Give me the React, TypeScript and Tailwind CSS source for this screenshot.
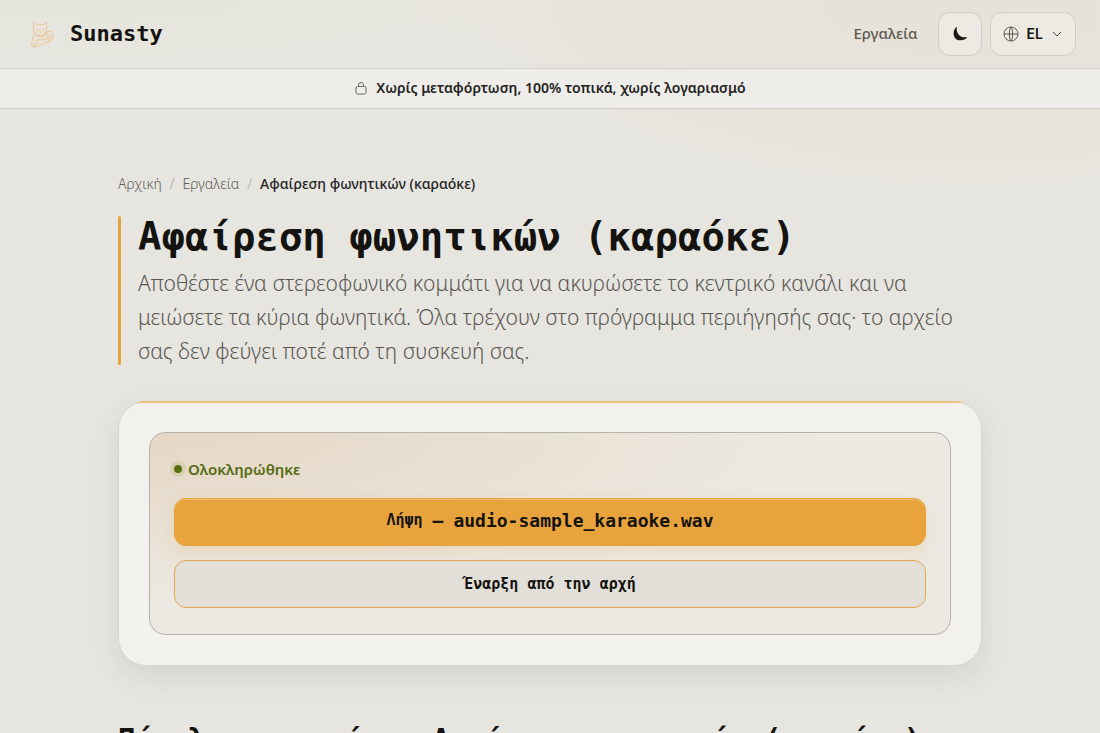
import React from "react";

const mono = "font-['DejaVu_Sans_Mono',monospace]";

function CatLogo() {
  return (
    <svg viewBox="0 0 32 32" className="size-8" fill="none" stroke="#e9c08a" strokeWidth="0.8" strokeLinecap="round" strokeLinejoin="round" aria-hidden="true">
      <path fill="#eae3d5" d="M20 16.500c1-3 5-4.500 7-2 2 3 1.500 7-1.500 9-2 1.300-4 1-5 0" />
      <path fill="#eae3d5" d="M9 14c-1-3-1-7 0-9.500l3 2.500c2-.6 4-.6 6 0l3-2.500c1 3 1 6 .5 8.500-1 3-4 4.500-6.500 4.500S10 16.500 9 14Z" />
      <path fill="#eae3d5" d="M9.500 16c-1.500 3-2.500 7-3 10 0 2.500 3 3.500 5.500 2.500l11-4.500c2-1 1-3.500-1-3.200l-7 1.200" />
      <path d="M21 15.500c2 1 2.500 3 2 5M11 22.500l4-1M8.500 27.500l4-2.500M25 16c1.500 1 1.500 3.500 0 5" />
      <path d="M12 11.500h1M17.500 11.500h1M14.500 13.500h1.500M11 17c2 2.500 7 2.500 9 0" />
    </svg>
  );
}

export default function App() {
  return (
    <div className="min-h-screen bg-[#e6e5e0] bg-[radial-gradient(ellipse_560px_220px_at_88%_0px,#e7e2d8_0%,#e7e3da_45%,#e6e5e000_100%),radial-gradient(ellipse_500px_80px_at_10%_0px,#e6e5dc_0%,#e6e5e000_100%)] font-['Noto_Sans',sans-serif] text-[#14130f]">
      <header className="flex h-[69px] items-center justify-between border-b border-[#cfcec9] px-6">
        <a href="#" className="flex items-center gap-3">
          <span className="flex size-[34px] items-center justify-center"><CatLogo /></span>
          <span className={`${mono} pb-0.5 text-[22px] font-bold`}>Sunasty</span>
        </a>
        <nav className="flex items-center gap-2">
          <a href="#" className="mr-3 pb-0.5 text-[15px] font-medium text-[#5b5952]">Εργαλεία</a>
          <button aria-label="Σκούρο θέμα" className="flex size-11 items-center justify-center rounded-xl border border-[#d0cec6] bg-[#edeae3]">
            <svg viewBox="0 0 16 16" className="size-[18px]" aria-hidden="true"><path fill="#1b1a17" d="M5.200 1.500C.8 4.500 1.200 13.600 8.500 13.600c2.500 0 4.800-.8 6-2.900C9.500 12 4 8.500 5.200 1.500Z" /></svg>
          </button>
          <button className="flex h-11 items-center gap-2 rounded-xl border border-[#d0cec6] bg-[#edeae3] px-3 font-['Inter',sans-serif] text-sm font-semibold">
            <svg viewBox="0 0 16 16" className="size-4" fill="none" stroke="#5b5952" aria-hidden="true"><circle cx="8" cy="8" r="7" /><path d="M1 8h14M8 1C5.800 3.500 5.800 12.500 8 15M8 1c2.200 2.500 2.200 11.500 0 14" /></svg>
            EL
            <svg viewBox="0 0 12 12" className="size-3" fill="none" stroke="#4c4a45" aria-hidden="true"><path d="m2 4 4 4 4-4" /></svg>
          </button>
        </nav>
      </header>
      <div className="flex h-10 items-center justify-center gap-2 border-b border-[#cfcec9] bg-[#eeede9] pb-0.5 text-sm font-semibold text-[#24231f]">
        <svg viewBox="0 0 14 14" className="size-3.5" fill="none" stroke="#6b6963" aria-hidden="true"><rect x="2" y="5.500" width="10" height="7.500" rx="1.500" /><path d="M4.500 5.500V4a2.500 2.500 0 0 1 5 0v1.500" /></svg>
        Χωρίς μεταφόρτωση, 100% τοπικά, χωρίς λογαριασμό
      </div>
      <main className="mx-auto max-w-[912px] px-6 pt-[63px]">
        <nav aria-label="Διαδρομή" className="flex gap-2 text-sm leading-6 font-[350] text-[#5f5d56]">
          <a href="#">Αρχική</a>
          <span className="text-[#aaa8a1]">/</span>
          <a href="#">Εργαλεία</a>
          <span className="text-[#aaa8a1]">/</span>
          <span className="font-medium text-[#24231f]">Αφαίρεση φωνητικών (καραόκε)</span>
        </nav>
        <div className="mt-5 flex gap-[17px]">
          <span className="mb-[3px] w-[3px] shrink-0 rounded-sm bg-[#e8a33d]" />
          <div>
            <h1 className={`${mono} text-[39px] leading-[42px] font-bold`}>Αφαίρεση φωνητικών (καραόκε)</h1>
            <p className="mt-2 text-[21px] leading-[34px] font-[350] text-[#5a5851]">
              Αποθέστε ένα στερεοφωνικό κομμάτι για να ακυρώσετε το κεντρικό κανάλι και να μειώσετε τα κύρια φωνητικά. Όλα τρέχουν στο πρόγραμμα περιήγησής σας· το αρχείο σας δεν φεύγει ποτέ από τη συσκευή σας.
            </p>
          </div>
        </div>
        <section className="relative mt-[33px] rounded-[28px] border border-[#d6d5cf] bg-[#f2f1ed] p-[30px] shadow-[0_10px_28px_rgba(60,60,40,0.10)]">
          <span className="pointer-events-none absolute -inset-px overflow-hidden rounded-[28px]">
            <span className="block h-0.5 bg-[#ecc07f]" />
          </span>
          <div className="rounded-2xl border border-[#b5b3a9] bg-[#ece9e2] bg-[radial-gradient(ellipse_at_0%_0%,#e5d7c4_0%,#e9e0d000_60%)] px-6 pt-6 pb-[26px]">
            <p className="flex items-center gap-1.5 text-[15px] leading-6 font-semibold text-[#556b12]">
              <span className="size-2 rounded-full bg-[#5a7012] ring-4 ring-[#d9cfb5]" />
              Ολοκληρώθηκε
            </p>
            <div className={`${mono} mt-[17px] flex flex-col gap-3.5 font-bold`}>
              <button className="flex h-12 items-center justify-center gap-2.5 rounded-xl border border-[#e8a33d] bg-[#e8a33d] pb-0.5 text-lg shadow-[0_6px_16px_rgba(232,163,61,0.18),inset_0_1px_0_rgba(255,255,255,0.3)]">
                <span className="text-[15px]">Λήψη</span><span>–</span><span>audio-sample_karaoke.wav</span>
              </button>
              <button className="h-12 rounded-xl border border-[#e3a74e] bg-[#e2dfd8] text-[15px]">Έναρξη από την αρχή</button>
            </div>
          </div>
        </section>
        <h2 className={`${mono} mt-[55px] text-[29px] leading-9 font-bold whitespace-nowrap`}>Πώς λειτουργεί το Αφαίρεση φωνητικών (καραόκε)</h2>
      </main>
    </div>
  );
}
